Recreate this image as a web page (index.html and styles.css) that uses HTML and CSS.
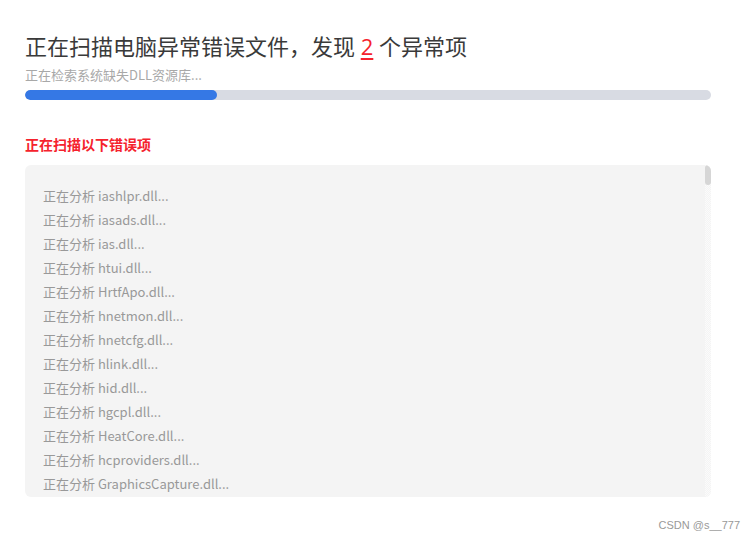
FILE: index.html
```
<!DOCTYPE html>
<html lang="zh-CN">
<head>
    <meta charset="UTF-8">
    <meta name="viewport" content="width=device-width, initial-scale=1.0">
    <title>DLL扫描</title>
    <link rel="stylesheet" href="styles.css">
</head>
<body>
    <div class="container">
        <h2 class="title">正在扫描电脑异常错误文件，发现 <span class="count">2</span> 个异常项</h2>
        <p class="status">正在检索系统缺失DLL资源库...</p>
        <div class="progress"><div class="progress-fill" style="width: 28%;"></div></div>

        <h3 class="section-title">正在扫描以下错误项</h3>
        <div class="scan-box">
            <ul class="scan-list">
                <li>正在分析 iashlpr.dll...</li>
                <li>正在分析 iasads.dll...</li>
                <li>正在分析 ias.dll...</li>
                <li>正在分析 htui.dll...</li>
                <li>正在分析 HrtfApo.dll...</li>
                <li>正在分析 hnetmon.dll...</li>
                <li>正在分析 hnetcfg.dll...</li>
                <li>正在分析 hlink.dll...</li>
                <li>正在分析 hid.dll...</li>
                <li>正在分析 hgcpl.dll...</li>
                <li>正在分析 HeatCore.dll...</li>
                <li>正在分析 hcproviders.dll...</li>
                <li>正在分析 GraphicsCapture.dll...</li>
            </ul>
            <div class="scrollbar"><div class="scrollbar-thumb"></div></div>
        </div>
    </div>
    <div class="watermark">CSDN @s__777</div>
</body>
</html>
```
FILE: styles.css
```
body {
    margin: 0;
    background: #fff;
    font-family: "Noto Sans CJK SC", "Open Sans", sans-serif;
}
.container {
    width: 686px;
    padding: 31px 0 0 25px;
}
.title {
    margin: 0;
    font-family: "Open Sans", "Noto Sans CJK SC", sans-serif;
    font-size: 22px;
    font-weight: normal;
    line-height: 30px;
    color: #3a3a3a;
}
.count {
    color: #f5222d;
    text-decoration: underline;
    text-underline-offset: 3px;
}
.status {
    margin: 5px 0 0;
    font-size: 13px;
    line-height: 18px;
    color: #a8a8a8;
}
.progress {
    margin-top: 6px;
    height: 10px;
    background: #d8dbe3;
    border-radius: 5px;
    overflow: hidden;
}
.progress-fill {
    height: 100%;
    background: #3578e5;
    border-radius: 5px;
}
.section-title {
    margin: 34px 0 0;
    font-size: 14px;
    line-height: 20px;
    font-weight: bold;
    color: #f5222d;
}
.scan-box {
    position: relative;
    margin-top: 11px;
    height: 332px;
    background: #f4f4f4;
    border-radius: 6px;
    overflow: hidden;
}
.scan-list {
    list-style: none;
    margin: 0;
    padding: 19px 18px 0;
}
.scan-list li {
    font-size: 13px;
    line-height: 24px;
    color: #999;
}
.scrollbar {
    position: absolute;
    top: 0;
    right: 0;
    width: 6px;
    height: 100%;
    background: repeating-conic-gradient(#f4f4f4 0 25%, #fbfbfb 0 50%) 0 0 / 2px 2px;
}
.scrollbar-thumb {
    height: 20px;
    background: #d6d6d6;
    border-radius: 3px;
}
.watermark {
    position: absolute;
    right: 15px;
    top: 519px;
    font-family: "Liberation Sans", sans-serif;
    font-size: 11px;
    color: #999;
}
```
